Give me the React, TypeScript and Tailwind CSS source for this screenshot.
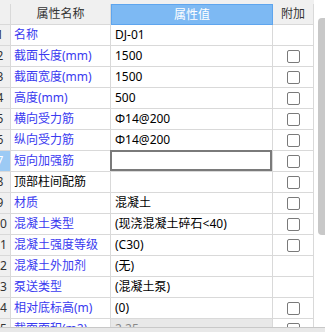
import React from "react";

type Row = {
  name: string;
  value: string;
  check: boolean;
  black?: boolean;
  editing?: boolean;
  readonly?: boolean;
};

const rows: Row[] = [
  { name: "名称", value: "DJ-01", check: false },
  { name: "截面长度(mm)", value: "1500", check: true },
  { name: "截面宽度(mm)", value: "1500", check: true },
  { name: "高度(mm)", value: "500", check: true },
  { name: "横向受力筋", value: "Φ14@200", check: true },
  { name: "纵向受力筋", value: "Φ14@200", check: true },
  { name: "短向加强筋", value: "", check: true, editing: true },
  { name: "顶部柱间配筋", value: "", check: true, black: true },
  { name: "材质", value: "混凝土", check: true },
  { name: "混凝土类型", value: "(现浇混凝土碎石<40)", check: true },
  { name: "混凝土强度等级", value: "(C30)", check: true },
  { name: "混凝土外加剂", value: "(无)", check: false },
  { name: "泵送类型", value: "(混凝土泵)", check: false },
  { name: "相对底标高(m)", value: "(0)", check: true },
  { name: "截面面积(m2)", value: "2.25", check: true, readonly: true },
];

function Checkbox() {
  return <div className="w-[13px] h-[13px] rounded-[2px] border border-[#7a7a7a] bg-white" />;
}

export default function App() {
  return (
    <div
      className="w-[325px] h-[332px] overflow-hidden bg-white flex flex-col text-[12px] leading-none text-black"
      style={{ fontFamily: '"Noto Sans", "Noto Sans CJK SC", sans-serif' }}
    >
      <div className="flex flex-1 min-h-0">
        {/* grid */}
        <div className="w-[314px] flex flex-col overflow-hidden">
          <div className="h-[4px] bg-[#f0f0f0] shrink-0" />
          {/* header */}
          <div className="flex h-[21px] shrink-0">
            <div className="w-[11px] bg-[#f0f0f0] border-r border-b border-[#d9d9d9]" />
            <div className="w-[100px] bg-[#f0f0f0] border-r border-b border-[#d9d9d9] flex items-center justify-center text-[#333]">
              属性名称
            </div>
            <div className="w-[162px] bg-[#7db9f3] border border-[#5ea5ee] flex items-center justify-center text-white">
              属性值
            </div>
            <div className="w-[41px] bg-[#f0f0f0] border-r border-b border-[#d9d9d9] flex items-center justify-center text-[#333]">
              附加
            </div>
          </div>
          {rows.map((r, i) => (
            <div key={i} className="flex h-[21px] shrink-0">
              <div
                className={
                  "w-[11px] overflow-hidden border-r border-b border-[#d9d9d9] flex items-center " +
                  (r.editing ? "bg-[#9ccaf4] text-white" : "bg-[#f0f0f0] text-[#333]")
                }
              >
                <div className="w-[24px] -ml-[12px] shrink-0 text-center">{i + 1}</div>
              </div>
              <div
                className={
                  "w-[100px] border-r border-b border-[#d9d9d9] flex items-center pl-[3px] whitespace-nowrap overflow-hidden " +
                  (r.black ? "text-black" : "text-[#3a3af0]")
                }
              >
                {r.name}
              </div>
              <div
                className={
                  "relative w-[162px] border-r border-b border-[#d9d9d9] flex items-center pl-[4px] whitespace-nowrap overflow-visible " +
                  (r.readonly ? "bg-[#e8e8e8] text-[#888]" : "")
                }
              >
                {r.value}
                {r.editing && (
                  <div className="absolute -left-px -top-px right-0 bottom-0 border-2 border-[#7a7a7a]" />
                )}
              </div>
              <div className="w-[41px] border-r border-b border-[#d9d9d9] flex items-center justify-center">
                {r.check && <Checkbox />}
              </div>
            </div>
          ))}
        </div>
        {/* vertical scrollbar */}
        <div className="flex-1 bg-white pl-[4px]">
          <div className="mt-[18px] h-[217px] bg-[#c8c8c8] rounded-l-[4px]" />
        </div>
      </div>
      <div className="h-[5px] shrink-0 border-t border-[#c8c8c8] bg-[#e8e8e8]" />
    </div>
  );
}
